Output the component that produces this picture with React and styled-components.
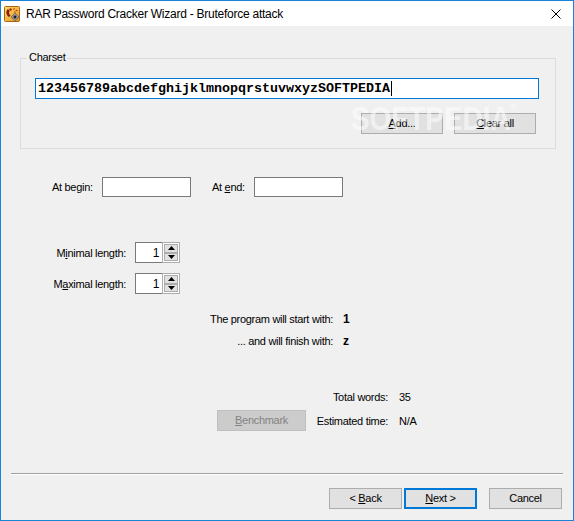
import React from 'react';
import styled, { createGlobalStyle } from 'styled-components';

const Global = createGlobalStyle`
  html, body { margin: 0; padding: 0; background: #ffffff; }
  body { font-family: "Liberation Sans", Arial, sans-serif; }
  * { box-sizing: border-box; }
`;

const Window = styled.div`
  width: 574px;
  height: 521px;
  border: 1px solid #1883d7;
  display: flex;
  flex-direction: column;
  background: #f0f0f0;
  overflow: hidden;
`;

const TitleBar = styled.div`
  height: 25px;
  flex: none;
  background: #ffffff;
  display: flex;
  align-items: center;
  padding-left: 3px;
`;

const TitleText = styled.span`
  margin-left: 6px;
  font-size: 12px;
  letter-spacing: -0.25px;
  color: #000;
  flex: 1;
`;

const CloseBox = styled.div`
  width: 46px;
  height: 25px;
  display: flex;
  align-items: center;
  justify-content: center;
  margin-right: -6px;
`;

const Client = styled.div`
  flex: 1;
  display: flex;
  flex-direction: column;
  font-size: 11px;
  letter-spacing: -0.3px;
  color: #000;
  white-space: nowrap;
`;

const GroupBox = styled.div`
  position: relative;
  margin: 32px 0 0 19px;
  width: 536px;
  height: 91px;
  border: 1px solid #dcdcdc;
  padding: 19px 0 0 14px;
  display: flex;
  flex-direction: column;
`;

const Legend = styled.span`
  position: absolute;
  top: -8px;
  left: 6px;
  padding: 0 2px;
  line-height: 13px;
  background: #f0f0f0;
`;

const CharsetInput = styled.div`
  width: 504px;
  height: 21px;
  border: 1px solid #0078d7;
  background: #ffffff;
  display: flex;
  align-items: center;
  padding-left: 2px;
  font-family: "Liberation Mono", "DejaVu Sans Mono", monospace;
  font-weight: bold;
  font-size: 13.33px;
  letter-spacing: 0;
  white-space: pre;
`;

const Caret = styled.span`
  display: inline-block;
  width: 1px;
  height: 15px;
  background: #000;
  margin-left: 1px;
`;

const ButtonRow = styled.div`
  width: 504px;
  display: flex;
  justify-content: flex-end;
  gap: 11px;
  padding-right: 3px;
  margin-top: 14px;
`;

const Button = styled.div`
  width: ${p => p.$w || 82}px;
  height: 21px;
  flex: none;
  display: flex;
  align-items: center;
  justify-content: center;
  background: ${p => (p.$disabled ? '#cccccc' : '#e1e1e1')};
  border: ${p => (p.$default ? '2px solid #0078d7' : p.$disabled ? '1px solid #bfbfbf' : '1px solid #adadad')};
  color: ${p => (p.$disabled ? '#838383' : '#000')};
  line-height: 13px;
  white-space: pre;
`;

const Watermark = styled.span`
  position: absolute;
  left: 330px;
  top: 44px;
  font-size: 34px;
  font-weight: bold;
  letter-spacing: 0;
  color: rgba(255, 255, 255, 0.55);
  transform: scaleX(0.82);
  transform-origin: left top;
  pointer-events: none;
  line-height: 30px;
  white-space: nowrap;
`;

const Reg = styled.sup`
  font-size: 10px;
  vertical-align: top;
  line-height: 10px;
`;

const AffixRow = styled.div`
  display: flex;
  align-items: center;
  margin-top: 28px;
  padding-left: 51px;
  height: 20px;
`;

const FieldLabel = styled.span`
  width: ${p => p.$w}px;
  margin-left: ${p => p.$ml || 0}px;
  flex: none;
`;

const TextBox = styled.div`
  width: 89px;
  height: 20px;
  border: 1px solid #7a7a7a;
  background: #ffffff;
  flex: none;
`;

const LengthGrid = styled.div`
  display: grid;
  grid-template-columns: 125px 45px;
  grid-auto-rows: 21px;
  column-gap: 9px;
  row-gap: 10px;
  margin-top: 45px;
  align-items: center;
`;

const RightLabel = styled.span`
  justify-self: end;
`;

const SpinBox = styled.div`
  display: flex;
  width: 45px;
  height: 21px;
`;

const SpinEdit = styled.div`
  flex: 1;
  border: 1px solid #7a7a7a;
  border-right: none;
  background: #ffffff;
  display: flex;
  align-items: center;
  justify-content: flex-end;
  padding-right: 3px;
  font-size: 12px;
`;

const SpinButtons = styled.div`
  width: 18px;
  display: flex;
  flex-direction: column;
  border: 1px solid #adadad;
  background: #ffffff;
  padding: 1px;
`;

const SpinButton = styled.div`
  flex: 1;
  background: #e1e1e1;
  border: 1px solid #adadad;
  display: flex;
  align-items: center;
  justify-content: center;
`;

const ResultGrid = styled.div`
  display: grid;
  grid-template-columns: 332px auto;
  grid-auto-rows: 16px;
  column-gap: 10px;
  row-gap: 6px;
  margin-top: 17px;
  align-items: center;
`;

const BoldValue = styled.span`
  font-weight: bold;
  font-size: 12px;
  letter-spacing: 0;
`;

const StatsGrid = styled.div`
  display: grid;
  grid-template-columns: 89px 82px auto;
  grid-template-rows: 16px 21px;
  row-gap: 5px;
  margin-top: 40px;
  padding-left: 216px;
  align-items: center;
`;

const StatValue = styled.span`
  padding-left: 11px;
`;

const Separator = styled.div`
  margin: auto 10px 0 10px;
  height: 2px;
  border-top: 1px solid #a0a0a0;
  border-bottom: 1px solid #ffffff;
`;

const FooterRow = styled.div`
  display: flex;
  justify-content: flex-end;
  margin-top: 13px;
  padding: 0 11px 11px 0;
`;

const Gap = styled.div`
  width: ${p => p.$w}px;
  flex: none;
`;

const U = styled.span`
  text-decoration: underline;
  text-underline-offset: 1px;
`;

const AppIcon = () => (
  <svg width="16" height="16" viewBox="0 0 16 16">
    <defs>
      <linearGradient id="ig" x1="0" y1="0" x2="1" y2="1">
        <stop offset="0" stopColor="#fbe06a" />
        <stop offset="1" stopColor="#e8901e" />
      </linearGradient>
    </defs>
    <rect x="0.5" y="0.5" width="15" height="15" rx="1" fill="url(#ig)" stroke="#a86414" />
    <path d="M4 3 C1.5 5 2 9 5 11 L6.5 9.5 C5 8.5 4.6 6.5 5.6 5 Z" fill="#8a1a10" />
    <path d="M5 3 L7 2 L8 4 L6 5 Z" fill="#b02015" />
    <circle cx="10" cy="3" r="0.8" fill="#c02818" />
    <circle cx="12.5" cy="4.5" r="0.8" fill="#c02818" />
    <circle cx="11" cy="6" r="0.7" fill="#c02818" />
    <path d="M7 11 L11 7 L15 11 L11 15 Z" fill="#9a9a9a" stroke="#555" strokeWidth="0.6" />
    <path d="M9.5 11 H12.5 M11 9.5 V12.5" stroke="#000" strokeWidth="1.2" />
  </svg>
);

const CloseIcon = () => (
  <svg width="10" height="10" viewBox="0 0 10 10">
    <path d="M0.5 0.5 L9.5 9.5 M9.5 0.5 L0.5 9.5" stroke="#000" strokeWidth="1" />
  </svg>
);

const Arrow = ({ up }) => (
  <svg width="7" height="4" viewBox="0 0 7 4">
    <path d={up ? 'M0 4 L3.5 0 L7 4 Z' : 'M0 0 L7 0 L3.5 4 Z'} fill="#000" />
  </svg>
);

const Spin = ({ value }) => (
  <SpinBox>
    <SpinEdit>{value}</SpinEdit>
    <SpinButtons>
      <SpinButton><Arrow up /></SpinButton>
      <SpinButton><Arrow /></SpinButton>
    </SpinButtons>
  </SpinBox>
);

export default function App() {
  return (
    <>
      <Global />
      <Window>
        <TitleBar>
          <AppIcon />
          <TitleText>RAR Password Cracker Wizard - Bruteforce attack</TitleText>
          <CloseBox><CloseIcon /></CloseBox>
        </TitleBar>
        <Client>
          <GroupBox>
            <Legend>Charset</Legend>
            <CharsetInput>
              123456789abcdefghijklmnopqrstuvwxyzSOFTPEDIA<Caret />
            </CharsetInput>
            <ButtonRow>
              <Button><U>A</U>dd...</Button>
              <Button><U>C</U>lear all</Button>
            </ButtonRow>
            <Watermark>SOFTPEDIA<Reg>®</Reg></Watermark>
          </GroupBox>

          <AffixRow>
            <FieldLabel $w={50}>At begin:</FieldLabel>
            <TextBox />
            <FieldLabel $w={42} $ml={21}>At <U>e</U>nd:</FieldLabel>
            <TextBox />
          </AffixRow>

          <LengthGrid>
            <RightLabel>M<U>i</U>nimal length:</RightLabel>
            <Spin value="1" />
            <RightLabel>M<U>a</U>ximal length:</RightLabel>
            <Spin value="1" />
          </LengthGrid>

          <ResultGrid>
            <RightLabel>The program will start with:</RightLabel>
            <BoldValue>1</BoldValue>
            <RightLabel>... and will finish with:</RightLabel>
            <BoldValue>z</BoldValue>
          </ResultGrid>

          <StatsGrid>
            <span />
            <RightLabel>Total words:</RightLabel>
            <StatValue>35</StatValue>
            <Button $w={89} $disabled><U>B</U>enchmark</Button>
            <RightLabel>Estimated time:</RightLabel>
            <StatValue>N/A</StatValue>
          </StatsGrid>

          <Separator />
          <FooterRow>
            <Button $w={73}>{'< '}<U>B</U>ack</Button>
            <Gap $w={2} />
            <Button $w={73} $default><U>N</U>{'ext >'}</Button>
            <Gap $w={12} />
            <Button $w={73}>Cancel</Button>
          </FooterRow>
        </Client>
      </Window>
    </>
  );
}
